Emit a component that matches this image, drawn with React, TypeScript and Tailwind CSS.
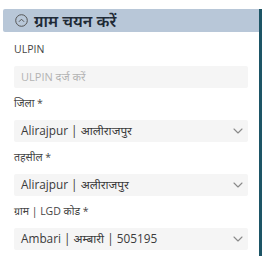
import React from "react";

const font = { fontFamily: '"Open Sans", "Noto Sans Devanagari", "Noto Sans", sans-serif' };

function Chevron() {
  return (
    <svg width="10" height="6" viewBox="0 0 10 6" fill="none" className="shrink-0">
      <path d="M1 1L5 5L9 1" stroke="#8a8a8a" strokeWidth="1.1" strokeLinecap="round" strokeLinejoin="round" />
    </svg>
  );
}

function Field({ label, value, placeholder }: { label: string; value?: string; placeholder?: string }) {
  return (
    <div className="flex flex-col gap-[7px]">
      <div className="h-[18px] flex items-center text-[10.5px] text-[#444]">{label}</div>
      <div className="h-[22px] flex items-center justify-between bg-[#f5f5f5] rounded-[2px] pl-[7px] pr-[5px]">
        {value ? (
          <span className="text-[11.8px] text-[#3a3a3a]">{value}</span>
        ) : (
          <span className="text-[11px] text-[#b3b3b3]">{placeholder}</span>
        )}
        {value ? <Chevron /> : null}
      </div>
    </div>
  );
}

export default function App() {
  return (
    <div className="w-[269px] h-[256px] bg-white overflow-hidden pt-[9px] pl-[3px]" style={font}>
      <div className="w-[259px] h-[247px] border-r-[3px] border-[#1d5566] flex flex-col">
        <div className="h-[23px] bg-[#b8c7d8] rounded-l-[2px] flex items-center pl-[12px] gap-[6px]">
          <svg width="13" height="13" viewBox="0 0 13 13" fill="none">
            <circle cx="6.5" cy="6.5" r="5.8" stroke="#555" strokeWidth="1" />
            <path d="M4.2 7.5L6.5 5.2L8.8 7.5" stroke="#555" strokeWidth="1" strokeLinecap="round" strokeLinejoin="round" />
          </svg>
          <span className="text-[16px] font-semibold text-[#1f2a36]">ग्राम चयन करें</span>
        </div>
        <div className="flex flex-col gap-[7px] pt-[9px] pl-[11px] pr-[11px]">
          <Field label="ULPIN" placeholder="ULPIN दर्ज करें" />
          <Field label="जिला *" value="Alirajpur | आलीराजपुर" />
          <Field label="तहसील *" value="Alirajpur | अलीराजपुर" />
          <Field label="ग्राम | LGD कोड *" value="Ambari | अम्बारी | 505195" />
        </div>
      </div>
    </div>
  );
}
